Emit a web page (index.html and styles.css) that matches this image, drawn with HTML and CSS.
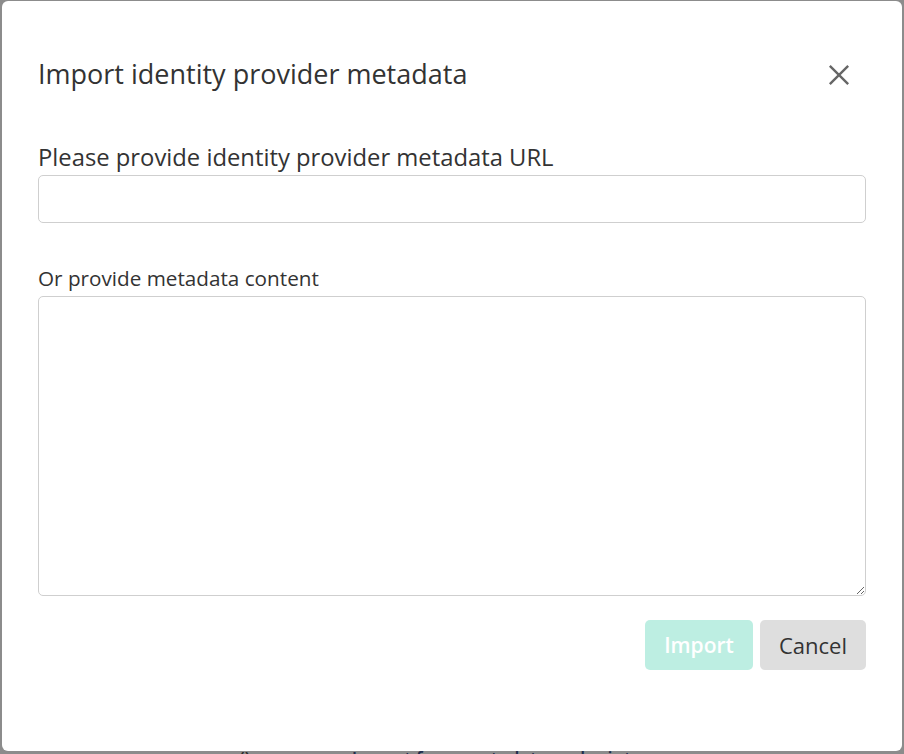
FILE: index.html
```html
<!DOCTYPE html>
<html lang="en">

<head>
    <meta charset="UTF-8">
    <meta name="viewport" content="width=device-width, initial-scale=1.0">
    <title>Import identity provider metadata</title>
    <link rel="stylesheet" href="styles.css">
</head>

<body>
    <div class="modal">
        <div class="modal-header">
            <h2>Import identity provider metadata</h2>
            <button class="close-btn" aria-label="Close">
                <svg width="24" height="24" viewBox="0 0 24 24">
                    <path d="M2 2 L22 22 M22 2 L2 22" stroke="#666" stroke-width="2.6" fill="none" />
                </svg>
            </button>
        </div>

        <label class="field-label url-label" for="metadataUrl">Please provide identity provider metadata URL</label>
        <input type="text" id="metadataUrl" class="text-input">

        <label class="field-label content-label" for="metadataContent">Or provide metadata content</label>
        <textarea id="metadataContent" class="text-area"></textarea>

        <div class="modal-actions">
            <button class="btn btn-import" disabled>Import</button>
            <button class="btn btn-cancel">Cancel</button>
        </div>
    </div>

    <div class="page-peek">
        <span class="peek-icon">()</span>
        <span class="peek-link">Import from metadata endpoint</span>
    </div>
</body>

</html>
```

FILE: styles.css
```css
body {
    font-family: "Open Sans", Arial, sans-serif;
    background-color: #8c8c8c;
    color: #333;
    margin: 0;
    padding: 1px 2px 0 2px;
    height: 754px;
    box-sizing: border-box;
    overflow: hidden;
}

.modal {
    background-color: #fff;
    border-radius: 6px;
    height: 750px;
    box-sizing: border-box;
    padding: 0 36px;
}

.modal-header {
    display: flex;
    align-items: center;
    justify-content: space-between;
    height: 146px;
}

.modal-header h2 {
    margin: 0;
    font-size: 27px;
    font-weight: 400;
    color: #333;
    margin-top: -2px;
}

.close-btn {
    background: none;
    border: none;
    padding: 0;
    margin-right: 14px;
    margin-top: 2px;
    width: 24px;
    height: 24px;
    cursor: pointer;
}

.close-btn svg {
    display: block;
    width: 22px;
    height: 22px;
}

.field-label {
    display: block;
    color: #333;
}

.url-label {
    font-size: 23.8px;
    line-height: 26px;
    margin-top: -3px;
    margin-bottom: 5px;
}

.content-label {
    font-size: 20.7px;
    line-height: 26px;
    margin-top: 42px;
    margin-bottom: 5px;
}

.text-input,
.text-area {
    display: block;
    width: 100%;
    box-sizing: border-box;
    border: 1px solid #cfcfcf;
    border-radius: 5px;
    font-family: inherit;
    font-size: 16px;
    padding: 8px 10px;
    margin: 0;
}

.text-input {
    height: 48px;
}

.text-area {
    height: 300px;
    resize: vertical;
}

.modal-actions {
    display: flex;
    justify-content: flex-end;
    gap: 7px;
    margin-top: 24px;
}

.btn {
    height: 50px;
    border: none;
    border-radius: 5px;
    font-family: inherit;
    font-size: 22px;
    padding: 0;
    cursor: pointer;
}

.btn-import {
    background-color: #bdeee2;
    color: #fff;
    font-weight: 600;
    font-size: 21px;
    width: 108px;
}

.btn-cancel {
    background-color: #dedede;
    color: #333;
    width: 106px;
}

.page-peek {
    height: 3px;
    overflow: hidden;
    font-size: 18px;
    line-height: 14px;
    font-weight: 600;
    color: #1f2d4d;
    padding-left: 237px;
}

.peek-icon {
    display: inline-block;
    width: 108px;
    color: #2a2a2a;
}
```
